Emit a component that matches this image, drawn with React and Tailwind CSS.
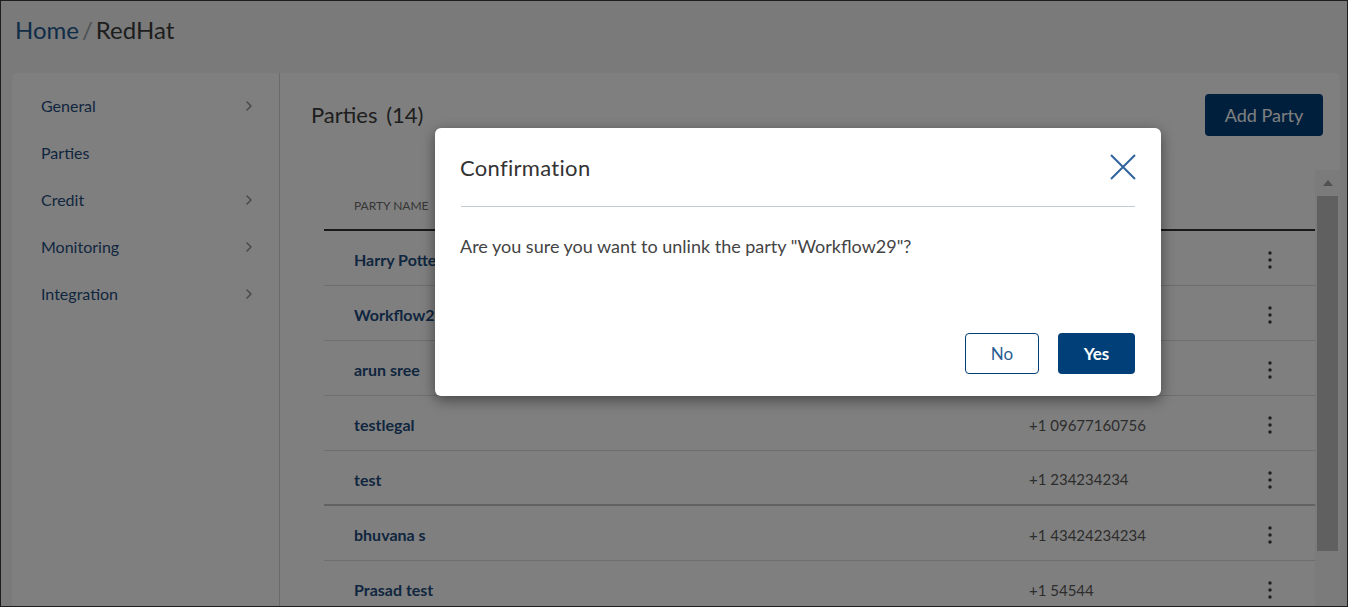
import { ChevronRight } from "lucide-react";

const menu = [
  { label: "General", arrow: true },
  { label: "Parties", arrow: false },
  { label: "Credit", arrow: true },
  { label: "Monitoring", arrow: true },
  { label: "Integration", arrow: true },
];

// phones of the first rows sit behind the dialog
const parties = [
  { name: "Harry Potter", phone: "" },
  { name: "Workflow29", phone: "" },
  { name: "arun sree", phone: "" },
  { name: "testlegal", phone: "+1 09677160756" },
  { name: "test", phone: "+1 234234234", thick: true },
  { name: "bhuvana s", phone: "+1 43424234234" },
  { name: "Prasad test", phone: "+1 54544" },
];

const Kebab = () => (
  <svg width="6" height="20" viewBox="0 0 6 20">
    <circle cx="3" cy="3" r="1.7" fill="#3c3c3c" />
    <circle cx="3" cy="10" r="1.7" fill="#3c3c3c" />
    <circle cx="3" cy="17" r="1.7" fill="#3c3c3c" />
  </svg>
);

const ConfirmModal = () => {
  return (
    <div className="absolute left-[434px] top-[127px] w-[726px] h-[268px] bg-white rounded-md shadow-[0_4px_14px_rgba(0,0,0,0.45)] flex flex-col">
      <div className="flex items-center justify-between pl-[25px] pr-[25px] h-[78px]">
        <h2 className="text-[22px] text-[#333] tracking-[0.3px]">Confirmation</h2>
        <button className="w-[26px] h-[26px] flex items-center justify-center">
          <svg width="26" height="26" viewBox="0 0 26 26">
            <path d="M1 1 L25 25 M25 1 L1 25" stroke="#2f649b" strokeWidth="2" />
          </svg>
        </button>
      </div>
      <div className="mx-[26px] border-t border-[#c3cad1]"></div>
      <p className="pl-[25px] mt-[26px] text-[18px] text-[#444]">
        Are you sure you want to unlink the party "Workflow29"?
      </p>
      <div className="flex justify-end gap-[19px] pr-[26px] mt-auto mb-[22px]">
        <button className="w-[74px] h-[41px] rounded border border-[#003f77] text-[#2a5d92] text-[17px]">
          No
        </button>
        <button className="w-[77px] h-[41px] rounded bg-[#003f77] text-white text-[17px] font-bold">
          Yes
        </button>
      </div>
    </div>
  );
};

const App = () => {
  return (
    <div
      className="relative w-[1348px] h-[607px] overflow-hidden border border-[#1e1e1e] bg-[#f4f4f4]"
      style={{ fontFamily: "Lato, 'Open Sans', sans-serif" }}
    >
      <div className="h-[72px] pl-[14px] pt-[11px] text-[24px]">
        <span className="text-[#1f5a91]">Home</span>
        <span className="text-[#9aa4ae] mx-[3px]">/</span>
        <span className="text-[#3c3c3c]">RedHat</span>
      </div>

      <div className="ml-[11px] mr-[7px] h-[560px] bg-white rounded-[5px] flex">
        <aside className="w-[268px] border-r border-[#d6d6d6] pt-[9px] shrink-0">
          {menu.map((item) => (
            <div
              key={item.label}
              className="h-[47px] flex items-center justify-between pl-[29px] pr-[22px] text-[16px] text-[#1f4d80]"
            >
              <span>{item.label}</span>
              {item.arrow && <ChevronRight size={16} color="#8a8a8a" strokeWidth={2} />}
            </div>
          ))}
        </aside>

        <section className="flex-1 flex flex-col">
          <div className="flex items-start justify-between pl-[31px] pr-[17px] pt-[21px] h-[97px]">
            <h1 className="text-[22px] text-[#3c3c3c] mt-[4px]">
              Parties <span className="ml-[3px]">(14)</span>
            </h1>
            <button className="w-[118px] h-[42px] rounded bg-[#003f7a] text-white text-[18px]">
              Add Party
            </button>
          </div>

          <div className="flex flex-1 pl-[44px]">
            <div className="flex-1 pt-[18px]">
              <div className="flex items-start pt-[9px] h-[43px] border-b-2 border-[#333] text-[12px] text-[#6c6c6c]">
                <div className="pl-[30px] w-[675px]">PARTY NAME</div>
                <div className="pl-[30px] flex-1"></div>
              </div>
              {parties.map((p) => (
                <div
                  key={p.name}
                  className={`flex items-center h-[55px] pt-[4px] ${p.thick ? "border-b-2 border-[#c4c4c4]" : "border-b border-[#dcdcdc]"}`}
                >
                  <div className="pl-[30px] w-[675px] text-[16px] font-bold text-[#1f4d80]">
                    {p.name}
                  </div>
                  <div className="pl-[30px] flex-1 text-[15px] text-[#5a5a5a]">{p.phone}</div>
                  <div className="w-[76px] flex justify-center pr-[14px]">
                    <Kebab />
                  </div>
                </div>
              ))}
            </div>

            <div className="w-[25px] bg-[#f6f6f6] flex flex-col items-center">
              <div className="h-[26px] flex items-center justify-center">
                <svg width="10" height="6" viewBox="0 0 10 6">
                  <path d="M5 0 L10 6 L0 6 Z" fill="#a3a3a3" />
                </svg>
              </div>
              <div className="w-[21px] h-[355px] bg-[#c0c0c0]"></div>
            </div>
          </div>
        </section>
      </div>

      <div className="absolute inset-0 bg-black/50"></div>
      <ConfirmModal />
    </div>
  );
};

export default App;
